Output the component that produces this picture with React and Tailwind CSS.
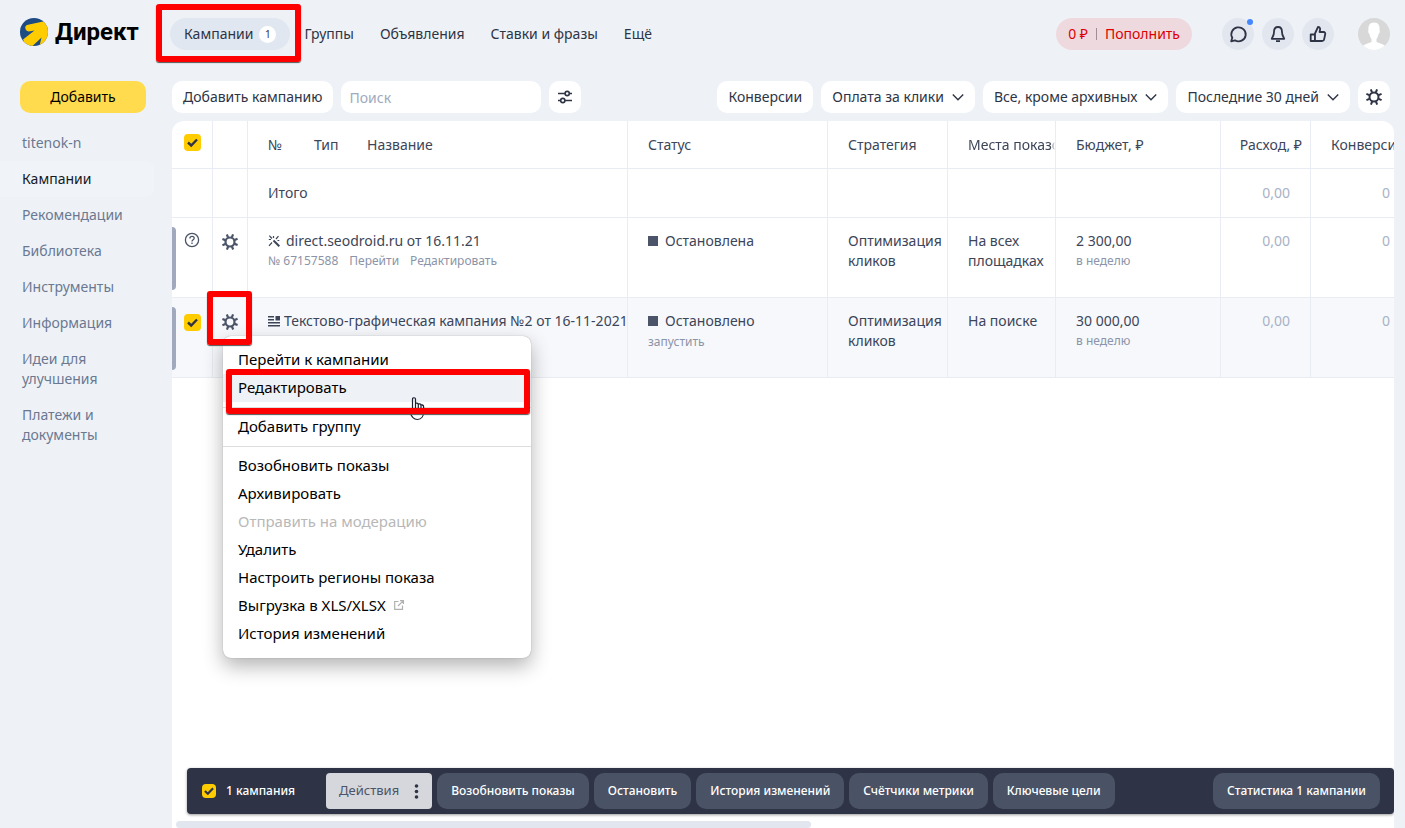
import { useState } from "react";

const NAV = ["Группы", "Объявления", "Ставки и фразы", "Ещё"];

const SIDE = [
  "titenok-n",
  "Кампании",
  "Рекомендации",
  "Библиотека",
  "Инструменты",
  "Информация",
  "Идеи для улучшения",
  "Платежи и документы",
];

const MENU = [
  ["Перейти к кампании", "Редактировать"],
  ["Добавить группу"],
  [
    "Возобновить показы",
    "Архивировать",
    "Отправить на модерацию",
    "Удалить",
    "Настроить регионы показа",
    "Выгрузка в XLS/XLSX",
    "История изменений",
  ],
];

const BULK = [
  "Возобновить показы",
  "Остановить",
  "История изменений",
  "Счётчики метрики",
  "Ключевые цели",
];

function Logo() {
  return (
    <a href="#" className="flex w-[152px] shrink-0 items-center gap-[7px] pb-1 pl-5">
      <svg width="28" height="28" viewBox="0 0 28 28" className="shrink-0">
        <defs>
          <clipPath id="logo-clip">
            <circle cx="14" cy="14" r="14" />
          </clipPath>
        </defs>
        <g clipPath="url(#logo-clip)">
          <rect width="28" height="28" fill="#1d4b82" />
          <path
            d="M28 3 L22 3.700 L8 6.800 C5.500 7.300 4.800 9.200 5.500 11 C6.200 13 8 13.800 10.500 13.300 L14.500 12.600 L3 21.500 L6 28 L12.500 28 L21.500 19.500 L19.500 28 L28 24 Z"
            fill="#ffcc00"
          />
        </g>
      </svg>
      <span className="font-[Roboto,sans-serif] text-2xl leading-8 font-bold text-black">
        Директ
      </span>
    </a>
  );
}

function Gear({ bold }) {
  return (
    <svg width="18" height="18" viewBox="0 0 18 18" fill="none" stroke="currentColor">
      <circle cx="9" cy="9" r="4.5" strokeWidth={bold ? 2.2 : 2} />
      {[22, 67, 112, 157, 202, 247, 292, 337].map((a) => (
        <path
          key={a}
          d="M9 4V0.800"
          strokeWidth={bold ? 2.2 : 2}
          transform={`rotate(${a} 9 9)`}
        />
      ))}
    </svg>
  );
}

function Check({ label, small }) {
  const [on, setOn] = useState(true);
  return (
    <label
      className={`relative inline-flex shrink-0 items-center justify-center rounded bg-[#ffcc00] ${
        small ? "size-3.5" : "size-[17px]"
      }`}
    >
      <input
        type="checkbox"
        aria-label={label}
        checked={on}
        onChange={(e) => setOn(e.target.checked)}
        className="absolute inset-0 size-full cursor-pointer appearance-none"
      />
      {on && (
        <svg
          width={small ? 10 : 11}
          height={small ? 10 : 11}
          viewBox="0 0 11 11"
          fill="none"
          stroke="#2e3445"
          strokeWidth="2.4"
          className="pointer-events-none"
        >
          <path d="M1 5.500 L4.200 8.500 L10 2.500" />
        </svg>
      )}
    </label>
  );
}

function Chevron() {
  return (
    <svg width="12" height="12" viewBox="0 0 12 12" fill="none" stroke="#2e3445" strokeWidth="1.4">
      <path d="M0.800 3.500 L6 8.700 L11.200 3.500" />
    </svg>
  );
}

function RoundButton({ label, dot, children }) {
  return (
    <button
      type="button"
      aria-label={label}
      className="relative flex size-8 items-center justify-center rounded-full bg-[#e2e6ef] text-[#2e3445]"
    >
      <svg
        width="20"
        height="20"
        viewBox="0 0 20 20"
        fill="none"
        stroke="currentColor"
        strokeWidth="1.8"
        strokeLinejoin="round"
      >
        {children}
      </svg>
      {dot && <span className="absolute top-px right-px size-1.5 rounded-full bg-[#4488ff]" />}
    </button>
  );
}

// Red frame drawn over a control to point at it
function Marker({ className }) {
  return (
    <span
      className={`pointer-events-none absolute z-30 rounded-[3px] border-6 border-[#ff0000] shadow-[0_1px_1px_#555] ${className}`}
    />
  );
}

function Header() {
  return (
    <header className="flex h-[68px] items-center pr-[15px] text-sm text-[#2e3445]">
      <Logo />
      <nav className="ml-[18px] flex items-center">
        <a
          href="#"
          className="relative flex h-8 items-center gap-1.5 rounded-full bg-[#e1e7f1] px-3.5"
        >
          Кампании
          <span className="flex size-[17px] items-center justify-center rounded-full bg-white text-[10px]">
            1
          </span>
          <Marker className="-top-3.5 -right-[11px] -bottom-3 -left-3.5" />
        </a>
        <div className="ml-3.5 flex gap-[26px]">
          {NAV.map((item) => (
            <a key={item} href="#">
              {item}
            </a>
          ))}
        </div>
      </nav>
      <div className="ml-auto flex h-8 items-center rounded-full bg-[#eed9df] px-3 text-[#dd0000]">
        <span>0 ₽</span>
        <span className="mx-2 h-3 w-px bg-[#a08d97]" />
        <a href="#">Пополнить</a>
      </div>
      <div className="ml-[30px] flex gap-2">
        <RoundButton label="Чат" dot>
          <path d="M3.200 17.300 L4.300 13.800 A7.200 7 0 1 1 7 16.400 Z" />
        </RoundButton>
        <RoundButton label="Уведомления">
          <path d="M10 3 C7 3 6 5.500 6 8 C6 11.500 4.500 12.500 3.800 14.800 H16.200 C15.500 12.500 14 11.500 14 8 C14 5.500 13 3 10 3 Z M8 17.200 H12" />
        </RoundButton>
        <RoundButton label="Отзыв">
          <path d="M7 9.500 L10 3 C12.500 3 12.500 5 11.500 8 H15.500 C17 8 17.500 9 17.200 10.300 L16.200 15 C16 16.500 15 17 14 17 H7 Z M2.700 10.500 H6.900 V17 H2.700 Z" />
        </RoundButton>
      </div>
      <button type="button" aria-label="Профиль" className="ml-6">
        <svg width="32" height="32" viewBox="0 0 32 32">
          <clipPath id="ava">
            <circle cx="16" cy="16" r="16" />
          </clipPath>
          <g clipPath="url(#ava)">
            <rect width="32" height="32" fill="#d8d8d8" />
            <path
              d="M16 4.500 C11.500 4.500 10 8 10.500 12 C9.700 13 10.300 15.500 11.500 16 C12 19 13 20.500 13.500 21 V24 C10 25.500 6 26 4 29 V32 H28 V29 C26 26 22 25.500 18.500 24 V21 C19 20.500 20 19 20.500 16 C21.700 15.500 22.300 13 21.500 12 C22 8 20.500 4.500 16 4.500 Z"
              fill="#fff"
            />
          </g>
        </svg>
      </button>
    </header>
  );
}

function Sidebar() {
  return (
    <aside className="w-[172px] shrink-0 pt-[13px]">
      <button
        type="button"
        className="ml-5 h-8 w-[126px] rounded-[10px] bg-[#ffdb4d] text-sm text-black"
      >
        Добавить
      </button>
      <nav className="mt-3 flex flex-col text-sm leading-5">
        {SIDE.map((item) => (
          <a
            key={item}
            href="#"
            className={`mr-[18px] rounded-r-lg py-2 pr-8 pl-[22px] ${
              item === "Кампании" ? "bg-[#f0f3f8] text-[#16191f]" : "text-[#6b7891]"
            }`}
          >
            {item}
          </a>
        ))}
      </nav>
    </aside>
  );
}

function ToolButton({ children, arrow }) {
  return (
    <button
      type="button"
      className="flex h-8 items-center gap-2 rounded-[10px] bg-white px-[11px] whitespace-nowrap"
    >
      {children}
      {arrow && <Chevron />}
    </button>
  );
}

function Toolbar() {
  return (
    <div className="flex items-center gap-2 pt-[13px] pr-1 pb-2 text-sm text-[#2e3445]">
      <ToolButton>Добавить кампанию</ToolButton>
      <input
        type="search"
        aria-label="Поиск"
        placeholder="Поиск"
        className="h-8 w-[200px] rounded-[10px] bg-white px-2 placeholder:text-[#a0aabd]"
      />
      <button
        type="button"
        aria-label="Фильтры"
        className="flex size-8 items-center justify-center rounded-[10px] bg-white"
      >
        <svg width="16" height="16" viewBox="0 0 16 16" fill="none" stroke="#2e3445" strokeWidth="1.600">
          <path d="M1 4.500 H8 M12.500 4.500 H15 M1 11.500 H3.500 M8 11.500 H15" />
          <circle cx="10.200" cy="4.500" r="2.100" />
          <circle cx="5.800" cy="11.500" r="2.100" />
        </svg>
      </button>
      <div className="ml-auto flex gap-2">
        <ToolButton>Конверсии</ToolButton>
        <ToolButton arrow>Оплата за клики</ToolButton>
        <ToolButton arrow>Все, кроме архивных</ToolButton>
        <ToolButton arrow>Последние 30 дней</ToolButton>
        <button
          type="button"
          aria-label="Настройки"
          className="flex size-8 items-center justify-center rounded-[10px] bg-white"
        >
          <Gear />
        </button>
      </div>
    </div>
  );
}

function Hand() {
  return (
    <svg
      width="18"
      height="24"
      viewBox="0 0 18 24"
      fill="none"
      stroke="#1c2030"
      strokeWidth="1.200"
      strokeLinejoin="round"
      className="pointer-events-none absolute top-[23px] left-[185px] z-20"
    >
      <path d="M4.500 13 V2 C4.500 0.300 7.500 0.300 7.500 2 V7 C7.500 5.800 10.300 5.800 10.300 7.500 C10.300 6.500 13 6.600 13 8.200 C13 7.400 15.600 7.500 15.600 9.500 V15 C15.600 19 13.500 22.500 9.500 22.500 C5.500 22.500 4 20 1.500 15 C0.500 12.500 2.500 11.500 4.500 14 Z" />
      <path d="M7.500 7 V11.500 M10.300 7.500 V11.500 M13 8.200 V11.500" />
    </svg>
  );
}

function ContextMenu() {
  return (
    <div className="absolute top-[38px] left-2.5 z-20 w-[308px] rounded-lg bg-white py-2.5 text-[15px] leading-5 text-black shadow-[0_0_1px_rgba(0,0,0,0.4),0_8px_20px_rgba(0,0,0,0.3)]">
      {MENU.map((group, i) => (
        <div key={i} className={i > 0 ? "mt-[5px] border-t border-[#dddddd] pt-[5px]" : ""}>
          {group.map((item) => (
            <div key={item} className="relative">
              <button
                type="button"
                disabled={item === "Отправить на модерацию"}
                className={`flex h-7 w-full items-center gap-2 px-[15px] pb-0.5 whitespace-nowrap disabled:text-[#b8b8b8] ${
                  item === "Редактировать" ? "bg-[#eef1f6]" : ""
                }`}
              >
                {item}
                {item === "Выгрузка в XLS/XLSX" && (
                  <svg width="10" height="10" viewBox="0 0 10 10" fill="none" stroke="#b0b0b0" strokeWidth="1.2">
                    <path d="M4.500 1.500 H0.700 V9.300 H8.500 V5.500 M6 0.600 H9.400 V4 M9.400 0.600 L4 6" />
                  </svg>
                )}
              </button>
              {item === "Редактировать" && (
                <>
                  <Hand />
                  <Marker className="-top-[5px] right-px -bottom-3 left-[3px]" />
                </>
              )}
            </div>
          ))}
        </div>
      ))}
    </div>
  );
}

function Status({ children }) {
  return (
    <div className="flex items-center gap-[7px]">
      <span className="size-2.5 bg-[#4b5468]" />
      {children}
    </div>
  );
}

const th = "border-r border-b border-[#e9edf3] px-5 text-left font-normal whitespace-nowrap";
const td = "border-r border-b border-[#e9edf3] px-5 align-top";
const sub = "text-xs leading-5 text-[#8b94a8]";

function Campaigns() {
  return (
    <table className="w-[1239px] table-fixed border-separate border-spacing-0 text-sm leading-5 text-[#3d4558]">
      <colgroup>
        <col className="w-[41px]" />
        <col className="w-[35px]" />
        <col className="w-[380px]" />
        <col className="w-[200px]" />
        <col className="w-[120px]" />
        <col className="w-[108px]" />
        <col className="w-[165px]" />
        <col className="w-[90px]" />
        <col className="w-[100px]" />
      </colgroup>
      <thead>
        <tr className="h-12">
          <th className="border-r border-b border-[#e9edf3] pt-[13px] align-top leading-none">
            <Check label="Выбрать все" />
          </th>
          <th className={th} />
          <th className={th}>
            <div className="flex">
              <span className="w-[46px]">№</span>
              <span className="w-[53px]">Тип</span>
              <span>Название</span>
            </div>
          </th>
          <th className={th}>Статус</th>
          <th className={th}>Стратегия</th>
          <th className="border-r border-b border-[#e9edf3] pr-0 pl-5 text-left font-normal">
            <div className="overflow-hidden mask-r-from-95% whitespace-nowrap">Места показов</div>
          </th>
          <th className={th}>Бюджет, ₽</th>
          <th className="border-r border-b border-[#e9edf3] pr-2 text-right font-normal whitespace-nowrap">
            Расход, ₽
          </th>
          <th className={th}>Конверсии</th>
        </tr>
      </thead>
      <tbody>
        <tr className="h-[49px]">
          <td className={td} />
          <td className={td} />
          <td className="border-r border-b border-[#e9edf3] px-5">Итого</td>
          <td className={td} />
          <td className={td} />
          <td className={td} />
          <td className={td} />
          <td className="border-r border-b border-[#e9edf3] px-5 text-right text-[#a9b2c6]">0,00</td>
          <td className="border-r border-b border-[#e9edf3] px-5 text-right text-[#a9b2c6]">0</td>
        </tr>
        <tr className="h-20">
          <td className="border-r border-b border-[#e9edf3] p-0 pt-[9px] align-top">
            <div className="flex">
              <span className="h-[63px] w-1 rounded-r bg-[#a0a9bd]" />
              <svg
                width="16"
                height="16"
                viewBox="0 0 16 16"
                fill="none"
                stroke="#4b5468"
                strokeWidth="1.300"
                className="mt-[5px] ml-2"
              >
                <circle cx="8" cy="8" r="6.600" />
                <path d="M5.900 6.500 C5.900 3.600 10.200 3.800 10.200 6.300 C10.200 7.900 8 7.800 8 9.600 M8 10.600 V12" />
              </svg>
            </div>
          </td>
          <td className="border-r border-b border-[#e9edf3] pt-[15px] align-top text-[#4b5468]">
            <button type="button" aria-label="Действия с кампанией" className="mx-auto block">
              <Gear bold />
            </button>
          </td>
          <td className="border-r border-b border-[#e9edf3] px-5 pt-[13px] align-top">
            <div className="flex items-center gap-1.5">
              <svg width="12" height="12" viewBox="0 0 12 12" fill="none" stroke="#3d4558" strokeWidth="1.200">
                <path d="M5.500 5.500 L11.300 11.300" strokeWidth="2" />
                <path d="M2 1.500 L4 3.500 M0.800 4.500 H3 M5.500 1 V3 M8 4 L10.500 1.200 M1 10.800 L4 7.500 M9.500 5.500 H11.300 M1 1 H2.200" />
              </svg>
              <a href="#">direct.seodroid.ru от 16.11.21</a>
            </div>
            <div className="flex gap-[11px] text-xs leading-5 text-[#8b94a8]">
              <span>№ 67157588</span>
              <a href="#">Перейти</a>
              <a href="#">Редактировать</a>
            </div>
          </td>
          <td className="border-r border-b border-[#e9edf3] px-5 pt-[13px] align-top">
            <Status>Остановлена</Status>
          </td>
          <td className="border-r border-b border-[#e9edf3] pt-[13px] pl-5 align-top">
            Оптимизация кликов
          </td>
          <td className="border-r border-b border-[#e9edf3] pt-[13px] pl-5 align-top">
            На всех площадках
          </td>
          <td className="border-r border-b border-[#e9edf3] px-5 pt-[13px] align-top">
            2 300,00
            <div className={sub}>в неделю</div>
          </td>
          <td className="border-r border-b border-[#e9edf3] px-5 pt-[13px] text-right align-top text-[#a9b2c6]">
            0,00
          </td>
          <td className="border-r border-b border-[#e9edf3] px-5 pt-[13px] text-right align-top text-[#a9b2c6]">
            0
          </td>
        </tr>
        <tr className="h-20 bg-[#f6f8fc]">
          <td className="border-r border-b border-[#e9edf3] p-0 pt-[9px] align-top">
            <div className="flex">
              <span className="mr-2 h-[63px] w-1 rounded-r bg-[#a0a9bd]" />
              <span className="mt-[7px] leading-none">
                <Check label="Выбрать кампанию" />
              </span>
            </div>
          </td>
          <td className="relative border-r border-b border-[#e9edf3] pt-[15px] align-top text-[#4b5468]">
            <button type="button" aria-label="Действия с кампанией" className="mx-auto block">
              <Gear bold />
            </button>
            <Marker className="-top-[7px] -right-[5px] bottom-8 -left-1.5" />
            <ContextMenu />
          </td>
          <td className="border-r border-b border-[#e9edf3] pt-[13px] pl-5 align-top">
            <div className="flex items-center gap-1">
              <svg width="12" height="12" viewBox="0 0 12 12" fill="#3d4558" className="shrink-0">
                <path d="M0 1h6v1.500H0zM0 4h6v1.500H0zM7.500 1H12v4.500H7.500zM0 7h12v1.500H0zM0 10h12v1.500H0z" />
              </svg>
              <a href="#" className="whitespace-nowrap">
                Текстово-графическая кампания №2 от 16-11-2021
              </a>
            </div>
          </td>
          <td className="border-r border-b border-[#e9edf3] px-5 pt-[13px] align-top">
            <Status>Остановлено</Status>
            <a href="#" className={sub}>
              запустить
            </a>
          </td>
          <td className="border-r border-b border-[#e9edf3] pt-[13px] pl-5 align-top">
            Оптимизация кликов
          </td>
          <td className="border-r border-b border-[#e9edf3] pt-[13px] pl-5 align-top">На поиске</td>
          <td className="border-r border-b border-[#e9edf3] px-5 pt-[13px] align-top">
            30 000,00
            <div className={sub}>в неделю</div>
          </td>
          <td className="border-r border-b border-[#e9edf3] px-5 pt-[13px] text-right align-top text-[#a9b2c6]">
            0,00
          </td>
          <td className="border-r border-b border-[#e9edf3] px-5 pt-[13px] text-right align-top text-[#a9b2c6]">
            0
          </td>
        </tr>
      </tbody>
    </table>
  );
}

function BulkBar() {
  return (
    <div className="mt-auto ml-[15px] flex h-[46px] shrink-0 items-center gap-[5px] rounded bg-[#2e3445] pr-3.5 pl-[15px] text-xs font-medium text-white shadow-[0_1px_3px_rgba(0,0,0,0.4)]">
      <Check label="Выбраны кампании" small />
      <span className="mr-[26px] ml-[5px]">1 кампания</span>
      <button
        type="button"
        className="flex h-9 items-center gap-[15px] rounded bg-[#d5d7dc] px-[13px] text-[13px] font-normal text-[#4b5468]"
      >
        Действия
        <svg width="5" height="15" viewBox="0 0 5 15" fill="#2e3445">
          <circle cx="2.500" cy="2" r="1.800" />
          <circle cx="2.500" cy="7.500" r="1.800" />
          <circle cx="2.500" cy="13" r="1.800" />
        </svg>
      </button>
      {BULK.map((item) => (
        <button
          key={item}
          type="button"
          className="h-9 rounded-[10px] bg-[#4a5265] px-3.5 whitespace-nowrap"
        >
          {item}
        </button>
      ))}
      <button
        type="button"
        className="ml-auto h-9 rounded-[10px] bg-[#4a5265] px-3.5 whitespace-nowrap"
      >
        Статистика 1 кампании
      </button>
    </div>
  );
}

export default function App() {
  return (
    <div className="flex min-h-screen flex-col bg-[#eef2f7] font-['Noto_Sans',sans-serif]">
      <Header />
      <div className="flex flex-1">
        <Sidebar />
        <main className="mr-[11px] flex min-w-0 flex-1 flex-col">
          <Toolbar />
          <section className="flex flex-1 flex-col overflow-hidden rounded-t-xl bg-white">
            <Campaigns />
            <BulkBar />
            <div className="mt-[7px] ml-1 h-[7px] w-[52%] shrink-0 rounded-full bg-[#e2e6ef]" />
          </section>
        </main>
      </div>
    </div>
  );
}
